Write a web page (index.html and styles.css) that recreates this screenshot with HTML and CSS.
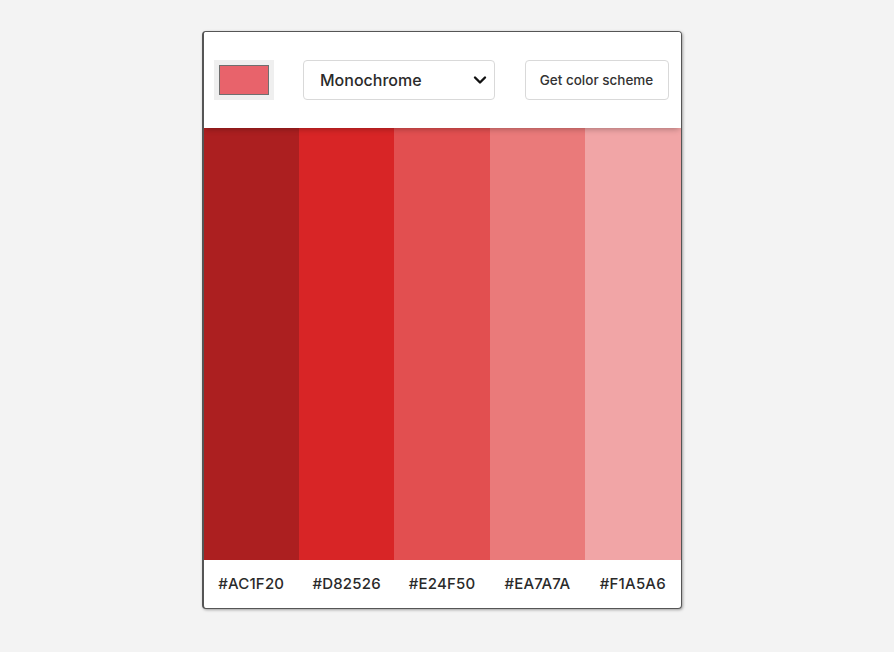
FILE: index.html
```html
<!DOCTYPE html>
<html lang="en">
<head>
<meta charset="utf-8">
<title>Color Scheme</title>
<link rel="stylesheet" href="styles.css">
</head>
<body>
<main class="card">
  <header class="controls">
    <div class="picker"><span class="swatch"></span></div>
    <div class="select">
      <span>Monochrome</span>
      <svg width="14" height="10" viewBox="0 0 14 10"><path d="M2 2.5 L7 7.5 L12 2.5" fill="none" stroke="#111" stroke-width="2.4" stroke-linecap="round" stroke-linejoin="round"/></svg>
    </div>
    <button class="btn">Get color scheme</button>
  </header>
  <section class="colors">
    <div class="col" style="background:#AC1F20"></div>
    <div class="col" style="background:#D82526"></div>
    <div class="col" style="background:#E24F50"></div>
    <div class="col" style="background:#EA7A7A"></div>
    <div class="col" style="background:#F1A5A6"></div>
  </section>
  <footer class="hexes">
    <span>#AC1F20</span>
    <span>#D82526</span>
    <span>#E24F50</span>
    <span>#EA7A7A</span>
    <span>#F1A5A6</span>
  </footer>
</main>
</body>
</html>
```
FILE: styles.css
```css
html, body { margin: 0; padding: 0; }
body {
  background: #f3f3f3;
  font-family: "Inter", "Open Sans", sans-serif;
  color: #222;
  min-height: 652px;
  padding: 31px 11px 0 0;
  box-sizing: border-box;
}
.card {
  width: 480px;
  height: 578px;
  margin: 0 auto;
  box-sizing: border-box;
  border: 1px solid #555;
  border-left-width: 2px;
  border-radius: 4px;
  box-shadow: 1px 1px 3px rgba(0,0,0,0.35);
  background: #fff;
  display: flex;
  flex-direction: column;
  overflow: hidden;
}
.controls {
  height: 96px;
  flex: none;
  display: flex;
  align-items: center;
  justify-content: space-between;
  padding: 0 12px 0 10px;
  background: #fff;
  position: relative;
  z-index: 1;
  box-shadow: 0 3px 6px -2px rgba(0,0,0,0.3);
}
.picker {
  width: 60px;
  height: 40px;
  box-sizing: border-box;
  background: #efefef;
  padding: 5px;
}
.swatch {
  display: block;
  height: 100%;
  box-sizing: border-box;
  border: 1px solid #6f6f6f;
  background: #E8636B;
}
.select {
  width: 192px;
  height: 40px;
  box-sizing: border-box;
  border: 1px solid #d9d9d9;
  border-radius: 4px;
  display: flex;
  align-items: center;
  justify-content: space-between;
  padding: 0 7px 0 16px;
  font-size: 16px;
  font-weight: 500;
  color: #2a2a2a;
}
.btn {
  width: 144px;
  height: 40px;
  box-sizing: border-box;
  border: 1px solid #d9d9d9;
  border-radius: 4px;
  background: #fff;
  font-family: inherit;
  font-size: 13.5px;
  font-weight: 500;
  color: #333;
  padding: 0;
}
.colors {
  flex: 1;
  display: flex;
}
.col { flex: 1; }
.hexes {
  height: 48px;
  flex: none;
  display: flex;
  align-items: center;
}
.hexes span {
  flex: 1;
  text-align: center;
  font-size: 15px;
  font-weight: 500;
  color: #2a2a2a;
  letter-spacing: 0.2px;
  padding-bottom: 1px;
}
```
